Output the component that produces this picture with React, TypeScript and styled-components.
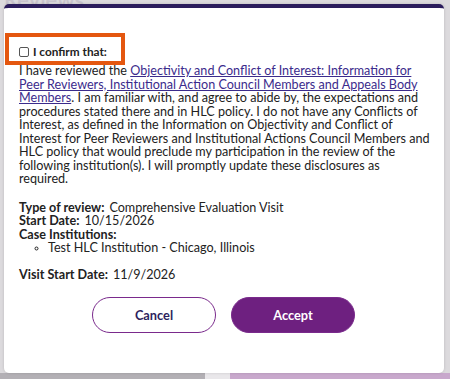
import React from 'react';
import styled, { createGlobalStyle } from 'styled-components';

const GlobalStyle = createGlobalStyle`
  html, body {
    margin: 0;
    padding: 0;
    background: #d8d6da;
    font-family: 'Lato', 'Open Sans', sans-serif;
    overflow: hidden;
  }
`;

const Page = styled.div`
  position: relative;
  width: 450px;
  height: 379px;
  overflow: hidden;
  background: #dcdadd;
`;

const PageTitle = styled.div`
  position: absolute;
  left: 4px;
  top: -14px;
  font-size: 22px;
  color: #c9c4cd;
  font-weight: 600;
`;

const Strip = styled.div`
  position: absolute;
  left: 0;
  right: 0;
  bottom: 0;
  height: 6px;
  display: flex;
`;

const Tile = styled.div<{ $bg: string; $w: number }>`
  width: ${p => p.$w}px;
  background: ${p => p.$bg};
`;

const Modal = styled.div`
  position: absolute;
  left: 4px;
  top: 4px;
  width: 440px;
  height: 369px;
  box-sizing: border-box;
  background: #fff;
  border-top: 4px solid #2b1c5c;
  border-radius: 5px;
  padding: 35px 8px 0 15px;
  box-shadow: 0 0 3px rgba(0, 0, 0, 0.15);
  color: #222;
  font-size: 12.6px;
  line-height: 13.5px;
`;

const ConfirmRow = styled.label`
  display: flex;
  align-items: center;
  gap: 4px;
  font-weight: 700;
  font-size: 11.8px;
  height: 18px;
  margin-bottom: 3px;
`;

const Check = styled.span`
  width: 8px;
  height: 8px;
  border: 1px solid #555;
  border-radius: 2px;
  background: #fff;
`;

const Highlight = styled.div`
  position: absolute;
  left: 1px;
  top: 25px;
  width: 112px;
  height: 24px;
  border: 4px solid #e4570f;
`;

const Body = styled.p`
  margin: 0;
`;

const DocLink = styled.a`
  color: #3b2b8c;
  text-decoration: underline;
`;

const Details = styled.div`
  margin-top: 15px;
`;

const Row = styled.div`
  display: flex;
  gap: 5px;
`;

const Key = styled.span`
  font-weight: 700;
`;

const List = styled.ul`
  margin: 0;
  padding-left: 29px;
  list-style: circle;
  li::marker {
    font-size: 9px;
  }
`;

const VisitRow = styled(Row)`
  margin-top: 13px;
`;

const Actions = styled.div`
  display: flex;
  justify-content: center;
  gap: 15px;
  margin-top: 16px;
  padding-right: 8px;
`;

const Button = styled.button<{ $primary?: boolean }>`
  width: 124px;
  height: 36px;
  border-radius: 18px;
  font-family: inherit;
  font-size: 12.8px;
  font-weight: 700;
  cursor: pointer;
  border: 1.5px solid #7a2a8c;
  background: ${p => (p.$primary ? '#6e2080' : '#fff')};
  color: ${p => (p.$primary ? '#fff' : '#2e1f5e')};
`;

const App: React.FC = () => {
  return (
    <Page>
      <GlobalStyle />
      <PageTitle>Reviews</PageTitle>
      <Strip>
        <Tile $bg="#b3b0b5" $w={205} />
        <Tile $bg="#e9e7ea" $w={25} />
        <Tile $bg="#c8a8cc" $w={220} />
      </Strip>
      <Modal>
        <Highlight />
        <ConfirmRow>
          <Check />
          I confirm that:
        </ConfirmRow>
        <Body>
          I have reviewed the{' '}
          <DocLink href="#">
            Objectivity and Conflict of Interest: Information for Peer Reviewers, Institutional Action
            Council Members and Appeals Body Members
          </DocLink>
          . I am familiar with, and agree to abide by, the expectations and procedures stated there and
          in HLC policy. I do not have any Conflicts of Interest, as defined in the Information on
          Objectivity and Conflict of Interest for Peer Reviewers and Institutional Actions Council
          Members and HLC policy that would preclude my participation in the review of the following
          institution(s). I will promptly update these disclosures as
          <br />
          required.
        </Body>
        <Details>
          <Row>
            <Key>Type of review:</Key>
            <span>Comprehensive Evaluation Visit</span>
          </Row>
          <Row>
            <Key>Start Date:</Key>
            <span>10/15/2026</span>
          </Row>
          <Row>
            <Key>Case Institutions:</Key>
          </Row>
          <List>
            <li>Test HLC Institution - Chicago, Illinois</li>
          </List>
          <VisitRow>
            <Key>Visit Start Date:</Key>
            <span>11/9/2026</span>
          </VisitRow>
        </Details>
        <Actions>
          <Button>Cancel</Button>
          <Button $primary>Accept</Button>
        </Actions>
      </Modal>
    </Page>
  );
};

export default App;
